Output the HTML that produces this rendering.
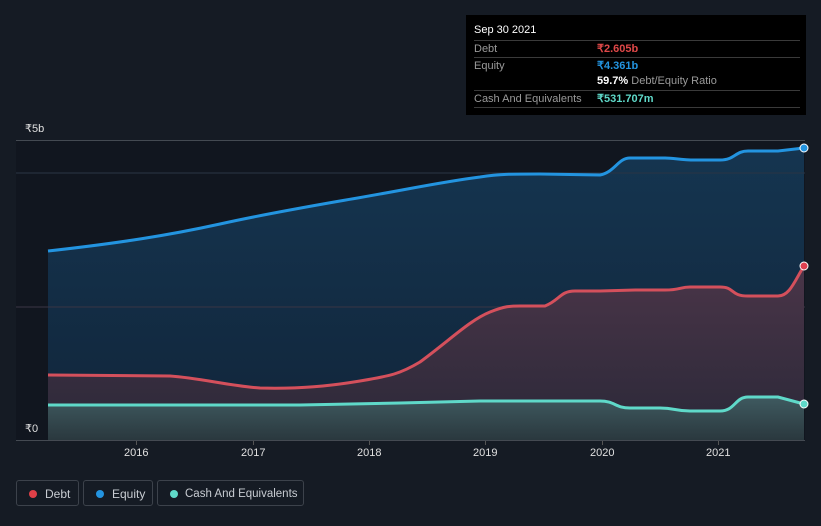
<!DOCTYPE html>
<html><head><style>
body{margin:0;background:#151b24;width:821px;height:526px;overflow:hidden;font-family:"Liberation Sans",sans-serif;position:relative}
.tt{position:absolute;left:466px;top:15px;width:340px;height:100px;background:#000;color:#ccc;font-size:11px}
.row{position:absolute;left:8px;right:6px;border-top:1px solid #3a3a3a;height:17px;line-height:17px;color:#9a9a9a}
.v{position:absolute;left:123px;font-weight:bold}
.leg{position:absolute;top:480px;height:26px;border:1px solid #3c424b;border-radius:3px;color:#c8ccd2;font-size:12px;line-height:26px;box-sizing:border-box;white-space:nowrap}
.leg i{position:absolute;left:12px;top:9px;width:8px;height:8px;border-radius:50%}
.lab{position:absolute;color:#e0e0e0;font-size:11px}
</style></head><body>
<svg width="821" height="526" style="position:absolute;left:0;top:0">
<defs>
<linearGradient id="ge" x1="0" y1="0" x2="0" y2="1"><stop offset="0" stop-color="#153550"/><stop offset="1" stop-color="#11253a"/></linearGradient>
<linearGradient id="gd" x1="0" y1="0" x2="0" y2="1"><stop offset="0" stop-color="#4a3548"/><stop offset="1" stop-color="#2a2838"/></linearGradient>
<linearGradient id="gc" x1="0" y1="0" x2="0" y2="1"><stop offset="0" stop-color="#3f5a60"/><stop offset="1" stop-color="#2a383e"/></linearGradient>
</defs>
<rect x="16" y="140" width="789" height="300" fill="#11161f"/>
<path d="M48,251 C120,243 170,235 220,224 C260,215 300,208 340,201 C400,191 440,182 480,177 C500,174 510,174 540,174 L600,175 C615,172 618,158 630,158 L665,158 C675,158 680,160 695,160 L720,160 C735,160 735,151 748,151 L778,151 L804,148 L804,440 L48,440Z" fill="url(#ge)"/>
<line x1="16" y1="173" x2="805" y2="173" stroke="#2a3544" stroke-width="1"/>
<line x1="16" y1="307" x2="805" y2="307" stroke="#3a3544" stroke-width="1"/>
<path d="M48,375 L170,376 C200,378 230,386 260,388 C300,389 330,386 360,381 C390,376 400,374 420,362 C450,340 470,320 490,312 C505,306 510,306 520,306 L545,306 C560,300 560,291 575,291 L600,291 L635,290 L665,290 C680,290 680,287 690,287 L720,287 C735,287 730,296 748,296 L778,296 C790,296 795,280 804,266 L804,440 L48,440Z" fill="url(#gd)"/>
<path d="M48,405 L300,405 L400,403 L480,401 L600,401 C615,401 615,408 630,408 L660,408 C675,408 675,411 690,411 L720,411 C735,411 735,397 748,397 L778,397 L804,404 L804,440 L48,440Z" fill="url(#gc)"/>
<path d="M48,251 C120,243 170,235 220,224 C260,215 300,208 340,201 C400,191 440,182 480,177 C500,174 510,174 540,174 L600,175 C615,172 618,158 630,158 L665,158 C675,158 680,160 695,160 L720,160 C735,160 735,151 748,151 L778,151 L804,148" fill="none" stroke="#2394e0" stroke-width="3"/>
<path d="M48,375 L170,376 C200,378 230,386 260,388 C300,389 330,386 360,381 C390,376 400,374 420,362 C450,340 470,320 490,312 C505,306 510,306 520,306 L545,306 C560,300 560,291 575,291 L600,291 L635,290 L665,290 C680,290 680,287 690,287 L720,287 C735,287 730,296 748,296 L778,296 C790,296 795,280 804,266" fill="none" stroke="#d4505c" stroke-width="3"/>
<path d="M48,405 L300,405 L400,403 L480,401 L600,401 C615,401 615,408 630,408 L660,408 C675,408 675,411 690,411 L720,411 C735,411 735,397 748,397 L778,397 L804,404" fill="none" stroke="#5fd9c9" stroke-width="3"/>
<line x1="16" y1="140.5" x2="805" y2="140.5" stroke="#444a52"/>
<line x1="16" y1="440.5" x2="805" y2="440.5" stroke="#444a52"/>
<g stroke="#555" stroke-width="1"><line x1="136.5" y1="441" x2="136.5" y2="445"/><line x1="253.5" y1="441" x2="253.5" y2="445"/><line x1="369.5" y1="441" x2="369.5" y2="445"/><line x1="485.5" y1="441" x2="485.5" y2="445"/><line x1="602.5" y1="441" x2="602.5" y2="445"/><line x1="718.5" y1="441" x2="718.5" y2="445"/></g>
<circle cx="804" cy="148" r="4" fill="#2394e0" stroke="#fff" stroke-width="1"/>
<circle cx="804" cy="266" r="4" fill="#e04050" stroke="#fff" stroke-width="1"/>
<circle cx="804" cy="404" r="4" fill="#5fd9c9" stroke="#fff" stroke-width="1"/>
</svg>
<div class="lab" style="left:25px;top:122px">₹5b</div>
<div class="lab" style="left:25px;top:422px">₹0</div>
<div class="lab" style="left:124px;top:447px">2016</div>
<div class="lab" style="left:241px;top:447px">2017</div>
<div class="lab" style="left:357px;top:447px">2018</div>
<div class="lab" style="left:473px;top:447px">2019</div>
<div class="lab" style="left:590px;top:447px">2020</div>
<div class="lab" style="left:706px;top:447px">2021</div>
<div class="tt">
<div style="position:absolute;left:8px;top:9px;color:#fff">Sep 30 2021</div>
<div class="row" style="top:25px">Debt<span class="v" style="color:#e04848">₹2.605b</span></div>
<div class="row" style="top:42px">Equity<span class="v" style="color:#2394e0">₹4.361b</span></div>
<div style="position:absolute;left:131px;top:60px;color:#9a9a9a"><b style="color:#fff">59.7%</b> Debt/Equity Ratio</div>
<div class="row" style="top:75px">Cash And Equivalents<span class="v" style="color:#5fd9c9">₹531.707m</span></div>
<div class="row" style="top:92px;height:1px"></div>
</div>
<div class="leg" style="left:16px;width:63px"><i style="background:#e04048"></i><span style="position:absolute;left:28px">Debt</span></div>
<div class="leg" style="left:83px;width:70px"><i style="background:#2394e0"></i><span style="position:absolute;left:28px">Equity</span></div>
<div class="leg" style="left:157px;width:147px"><i style="background:#5fd9c9"></i><span style="position:absolute;left:27px;font-size:11.5px">Cash And Equivalents</span></div>
</body></html>
